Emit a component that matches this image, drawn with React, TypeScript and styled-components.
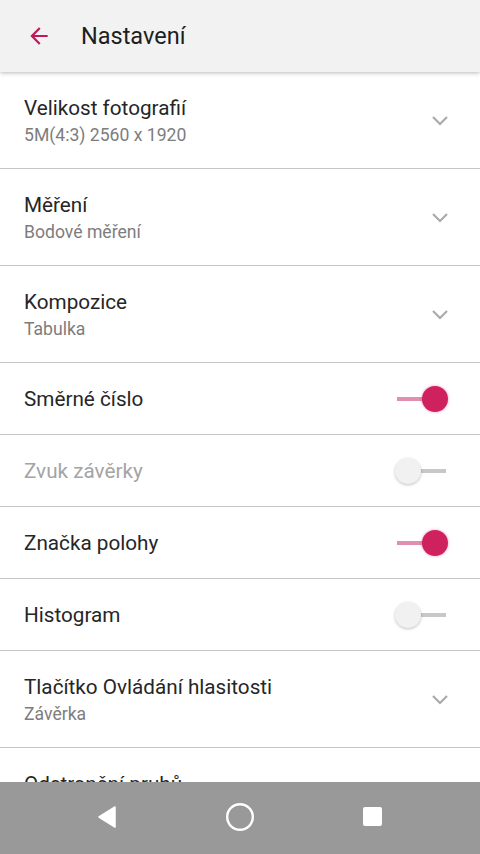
import * as React from 'react'
import styled, { createGlobalStyle } from 'styled-components'

const GlobalStyle = createGlobalStyle`
    html, body {
        margin: 0;
        padding: 0;
        background: #ffffff;
    }
    * {
        box-sizing: border-box;
    }
`

const StyledScreen = styled.div`
    width: 480px;
    height: 854px;
    display: flex;
    flex-direction: column;
    font-family: Roboto, 'Noto Sans', sans-serif;
    overflow: hidden;
`

const StyledToolbar = styled.div`
    position: relative;
    z-index: 1;
    flex: 0 0 72px;
    display: flex;
    align-items: center;
    background: #f2f2f2;
    box-shadow: 0 1px 4px rgba(0, 0, 0, 0.28);
`

const StyledBackButton = styled.div`
    width: 81px;
    display: flex;
    justify-content: center;
    padding-right: 3px;
`

const StyledTitle = styled.div`
    font-size: 23.5px;
    color: #1e1e1e;
    padding-bottom: 1px;
`

const StyledList = styled.div`
    flex: 1 1 auto;
    overflow: hidden;
`

const StyledRow = styled.div<{ $tall: boolean }>`
    height: ${(p) => (p.$tall ? '97px' : '72px')};
    display: flex;
    align-items: center;
    padding: 0 31px 0 24px;
    border-bottom: 1px solid #c4c4c4;
`

const StyledText = styled.div`
    flex: 1;
    display: flex;
    flex-direction: column;
    gap: 5px;
    padding-top: 1px;
`

const StyledLabel = styled.div<{ $disabled?: boolean }>`
    font-size: 20.7px;
    color: ${(p) => (p.$disabled ? '#a4a4a4' : '#262626')};
`

const StyledValue = styled.div`
    font-size: 17.6px;
    color: #7d7d7d;
`

const StyledChevron = styled.div`
    width: 24px;
    display: flex;
    justify-content: center;
    margin-right: -3px;
`

const StyledSwitch = styled.div`
    position: relative;
    width: 52px;
    height: 28px;
`

const StyledTrack = styled.div<{ $on: boolean }>`
    position: absolute;
    top: 12px;
    height: 4px;
    left: ${(p) => (p.$on ? '0px' : '12px')};
    right: ${(p) => (p.$on ? '14px' : '3px')};
    background: ${(p) => (p.$on ? '#e18fb0' : '#c8c8c8')};
`

const StyledThumb = styled.div<{ $on: boolean }>`
    position: absolute;
    top: 1px;
    left: ${(p) => (p.$on ? '25px' : '-2px')};
    width: 26px;
    height: 26px;
    border-radius: 50%;
    background: ${(p) => (p.$on ? '#d0215f' : '#f1f1f1')};
    box-shadow: ${(p) => (p.$on ? '0 0 3px rgba(208, 33, 95, 0.45)' : '0 1px 3px rgba(0, 0, 0, 0.25)')};
`

const StyledNavBar = styled.div`
    flex: 0 0 72px;
    background: #999999;
    display: flex;
    align-items: center;
    justify-content: space-between;
    padding: 0 96px 2px 96px;
`

interface Setting {
    label: string
    value?: string
    toggle?: boolean
    disabled?: boolean
}

const SETTINGS: Setting[] = [
    { label: 'Velikost fotografií', value: '5M(4:3) 2560 x 1920' },
    { label: 'Měření', value: 'Bodové měření' },
    { label: 'Kompozice', value: 'Tabulka' },
    { label: 'Směrné číslo', toggle: true },
    { label: 'Zvuk závěrky', toggle: false, disabled: true },
    { label: 'Značka polohy', toggle: true },
    { label: 'Histogram', toggle: false },
    { label: 'Tlačítko Ovládání hlasitosti', value: 'Závěrka' },
    { label: 'Odstranění pruhů', value: 'Auto' },
]

const Chevron = () => (
    <svg width="18" height="12" viewBox="0 0 18 12">
        <path d="M2 3 L9 10 L16 3" fill="none" stroke="#ababab" strokeWidth="2.2" />
    </svg>
)

class App extends React.Component {
    render() {
        return (
            <>
                <GlobalStyle />
                <StyledScreen>
                    <StyledToolbar>
                        <StyledBackButton>
                            <svg width="26" height="26" viewBox="0 0 24 24">
                                <path
                                    d="M20 11H7.83l5.59-5.59L12 4l-8 8 8 8 1.41-1.41L7.83 13H20v-2z"
                                    fill="#c2185b"
                                />
                            </svg>
                        </StyledBackButton>
                        <StyledTitle>Nastavení</StyledTitle>
                    </StyledToolbar>
                    <StyledList>
                        {SETTINGS.map((s) => {
                            const isToggle = s.toggle !== undefined
                            return (
                                <StyledRow key={s.label} $tall={!isToggle}>
                                    <StyledText>
                                        <StyledLabel $disabled={s.disabled}>{s.label}</StyledLabel>
                                        {s.value && <StyledValue>{s.value}</StyledValue>}
                                    </StyledText>
                                    {isToggle ? (
                                        <StyledSwitch>
                                            <StyledTrack $on={!!s.toggle} />
                                            <StyledThumb $on={!!s.toggle} />
                                        </StyledSwitch>
                                    ) : (
                                        <StyledChevron>
                                            <Chevron />
                                        </StyledChevron>
                                    )}
                                </StyledRow>
                            )
                        })}
                    </StyledList>
                    <StyledNavBar>
                        <svg width="22" height="24" viewBox="0 0 22 24">
                            <path d="M19 2 L3 12 L19 22 Z" fill="#ffffff" stroke="#ffffff" strokeWidth="1.5" strokeLinejoin="round" />
                        </svg>
                        <svg width="30" height="30" viewBox="0 0 30 30">
                            <circle cx="15" cy="15" r="12.8" fill="none" stroke="#ffffff" strokeWidth="2.4" />
                        </svg>
                        <svg width="22" height="22" viewBox="0 0 22 22">
                            <rect x="1" y="1" width="19" height="19" rx="2" fill="#ffffff" />
                        </svg>
                    </StyledNavBar>
                </StyledScreen>
            </>
        )
    }
}

export default App
